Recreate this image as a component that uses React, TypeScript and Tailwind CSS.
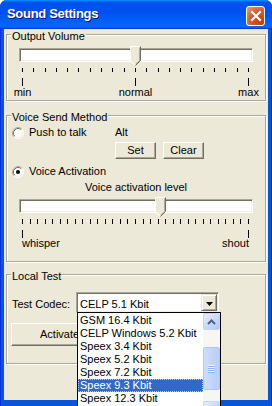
// Sound Settings dialog (XP frame, classic controls)

const CODECS = [
  "GSM 16.4 Kbit",
  "CELP Windows 5.2 Kbit",
  "Speex 3.4 Kbit",
  "Speex 5.2 Kbit",
  "Speex 7.2 Kbit",
  "Speex 9.3 Kbit",
  "Speex 12.3 Kbit",
  "Speex 16.8 Kbit",
]

function Radio({ checked }: { checked?: boolean }) {
  return (
    <svg width="12" height="12" viewBox="0 0 12 12" className="shrink-0">
      <circle cx="6" cy="6" r="5" fill="#fff" />
      <path d="M2.11 9.89A5.5 5.5 0 0 1 9.89 2.11" fill="none" stroke="#ACA899" />
      <path d="M9.89 2.11A5.5 5.5 0 0 1 2.11 9.89" fill="none" stroke="#fff" />
      <path d="M2.82 9.18A4.5 4.5 0 0 1 9.18 2.82" fill="none" stroke="#716F64" />
      <path d="M9.18 2.82A4.5 4.5 0 0 1 2.82 9.18" fill="none" stroke="#F1EFE2" />
      {checked ? <circle cx="6" cy="6" r="2" fill="#000" /> : null}
    </svg>
  )
}

function Thumb({ className }: { className: string }) {
  return (
    <svg width="11" height="20" viewBox="0 0 11 20" className={`absolute -top-[3px] ${className}`}>
      <path d="M0.5 0.5H10.5V14.5L5.5 19.5L0.5 14.5Z" fill="#ECE9D8" />
      <path d="M0.5 14.5V0.5H10" fill="none" stroke="#fff" />
      <path d="M0.5 14.5L5 19" fill="none" stroke="#fff" />
      <path d="M9.5 1.5V14.3L5.5 18.3" fill="none" stroke="#ACA899" />
      <path d="M10.5 0.5V14.5L5.5 19.5" fill="none" stroke="#716F64" />
    </svg>
  )
}

function Track({ thumb }: { thumb: string }) {
  return (
    <div className="relative ml-[12px] h-[14px] w-[234px] border border-t-[#ACA899] border-l-[#ACA899] border-r-white border-b-white bg-white shadow-[inset_1px_1px_#716F64,inset_-1px_-1px_#F1EFE2]">
      <Thumb className={thumb} />
    </div>
  )
}

function Ticks({ count, h }: { count: number; h: string }) {
  return (
    <div className="ml-[15px] mt-[6px] flex w-[227px] justify-between">
      {Array.from({ length: count }).map((_, i) => (
        <div key={i} className={`w-px bg-black ${h}`} />
      ))}
    </div>
  )
}

function Btn({ children, className }: { children: React.ReactNode; className: string }) {
  return (
    <button
      type="button"
      className={`flex items-center border border-t-white border-l-white border-r-[#716F64] border-b-[#716F64] bg-[#ECE9D8] leading-[13px] shadow-[inset_-1px_-1px_#ACA899] ${className}`}
    >
      {children}
    </button>
  )
}

function Group({ label, className, children }: { label: string; className: string; children: React.ReactNode }) {
  return (
    <div className={`relative mx-[2px] border border-[#ACA899] shadow-[inset_1px_1px_#fff,1px_1px_#fff] ${className}`}>
      <span className="absolute -top-[5px] left-[4px] bg-[#ECE9D8] px-px leading-[13px]">{label}</span>
      {children}
    </div>
  )
}

function ScrollBtn({ down }: { down?: boolean }) {
  return (
    <div className="flex h-[17px] w-[17px] shrink-0 items-center justify-center rounded-[2px] border border-[#C3D3FD] bg-[linear-gradient(135deg,#E6EEFE_0%,#C6D6FB_60%,#B4C8F6_100%)]">
      <svg width="9" height="6" viewBox="0 0 9 6">
        <path d={down ? "M1 1L4.5 4.5L8 1" : "M1 5L4.5 1.5L8 5"} fill="none" stroke="#4D6185" strokeWidth="2" />
      </svg>
    </div>
  )
}

function CodecList() {
  return (
    <div className="absolute left-0 top-full z-10 flex w-[144px] border border-black bg-white">
      <div className="flex-1 pt-px">
        {CODECS.map((c) =>
          c === "Speex 9.3 Kbit" ? (
            <div key={c} className="h-[13px] whitespace-nowrap border border-dotted border-[#D8C99A] bg-[#316AC5] pl-px leading-[11px] text-white">
              {c}
            </div>
          ) : (
            <div key={c} className="h-[13px] whitespace-nowrap pl-[2px] leading-[13px]">
              {c}
            </div>
          ),
        )}
      </div>
      <div className="flex w-[17px] flex-col bg-[#F7F6F0]">
        <ScrollBtn />
        <div className="mt-[17px] flex h-[43px] flex-col items-center justify-center gap-px rounded-[2px] border border-[#B2C6F6] bg-[linear-gradient(90deg,#CFDCFD,#B9CDF9)]">
          {[0, 1, 2, 3].map((i) => (
            <div key={i} className="h-px w-[7px] bg-[#EEF4FE] shadow-[0_1px_#8CB0F8]" />
          ))}
        </div>
        <div className="mt-auto">
          <ScrollBtn down />
        </div>
      </div>
    </div>
  )
}

export default function App() {
  return (
    <div className="h-[406px] w-[272px] overflow-hidden font-['Liberation_Sans',Arial,sans-serif] text-[11px] text-black">
      <div className="flex h-full flex-col rounded-t-[7px] bg-[#0855DD] shadow-[inset_1px_0_#0831D9,inset_-1px_0_#001EA0]">
        <div className="flex h-[29px] shrink-0 items-start justify-between rounded-t-[7px] bg-[linear-gradient(180deg,#0997ff,#0053ee_8%,#0050ee_40%,#06f_88%,#06f_93%,#005bff_95%,#003dd7_96%,#003dd7)]">
          <span className="pl-[7px] pt-[6px] text-[13px] font-bold leading-[15px] tracking-[-0.3px] text-white [text-shadow:1px_1px_#0F1089]">
            Sound Settings
          </span>
          <div className="mr-[7px] mt-[6px] flex h-[20px] w-[19px] items-center justify-center rounded-[3px] border border-white bg-[radial-gradient(circle_at_85%_85%,#C43C0A_0%,#DA5A2C_55%,#EB9C7E_100%)]">
            <svg width="12" height="12" viewBox="0 0 12 12">
              <path d="M2 2L10 10M10 2L2 10" stroke="#fff" strokeWidth="2.2" strokeLinecap="square" />
            </svg>
          </div>
        </div>

        <div className="mx-[4px] mb-[6px] flex flex-1 flex-col bg-[#ECE9D8] pt-[5px]">
          <Group label="Output Volume" className="pb-[2px] pt-[13px]">
            <Track thumb="left-[110px]" />
            <Ticks count={21} h="h-[4px]" />
            <div className="ml-[15px] mt-[6px] flex w-[227px] justify-between">
              {["min", "normal", "max"].map((l) => (
                <div key={l} className="flex w-px flex-col items-center">
                  <div className="h-[8px] w-px bg-black" />
                  <span className="mt-px whitespace-nowrap leading-[11px]">{l}</span>
                </div>
              ))}
            </div>
          </Group>

          <Group label="Voice Send Method" className="mt-[14px] pb-[12px] pt-[10px]">
            <div className="flex h-[13px] items-center leading-[13px]">
              <div className="flex w-[108px] items-center gap-[5px] pl-[5px]">
                <Radio />
                <span>Push to talk</span>
              </div>
              <span>Alt</span>
            </div>
            <div className="ml-[108px] mt-[3px] flex gap-[7px]">
              <Btn className="h-[17px] w-[41px] justify-center">Set</Btn>
              <Btn className="h-[17px] w-[41px] justify-center">Clear</Btn>
            </div>
            <div className="mt-[6px] flex h-[13px] items-center gap-[5px] pl-[5px] leading-[13px]">
              <Radio checked />
              <span>Voice Activation</span>
            </div>
            <div className="ml-[12px] mt-[3px] w-[234px] text-center leading-[13px]">Voice activation level</div>
            <div className="mt-[5px]">
              <Track thumb="left-[135px]" />
            </div>
            <Ticks count={31} h="h-[5px]" />
            <div className="ml-[15px] mt-[6px] flex w-[227px] justify-between">
              <div className="flex w-px flex-col items-start">
                <div className="h-[8px] w-px bg-black" />
                <span className="whitespace-nowrap leading-[11px]">whisper</span>
              </div>
              <div className="flex w-px flex-col items-end">
                <div className="h-[8px] w-px bg-black" />
                <span className="whitespace-nowrap leading-[11px]">shout</span>
              </div>
            </div>
          </Group>

          <Group label="Local Test" className="mt-[12px] pb-[17px] pt-[17px]">
            <div className="flex items-start">
              <span className="ml-[5px] mt-[6px] w-[64px] leading-[13px]">Test Codec:</span>
              <div className="relative h-[21px] w-[143px] border border-t-[#ACA899] border-l-[#ACA899] border-r-white border-b-white bg-white p-px shadow-[inset_1px_1px_#716F64,inset_-1px_-1px_#F1EFE2]">
                <div className="flex h-full">
                  <div className="flex flex-1 items-center pl-[2px] pt-[3px] leading-[13px]">CELP 5.1 Kbit</div>
                  <div className="flex w-[16px] items-center justify-center border border-t-[#ECE9D8] border-l-[#ECE9D8] border-r-[#716F64] border-b-[#716F64] bg-[#ECE9D8] pt-[3px] shadow-[inset_1px_1px_#fff,inset_-1px_-1px_#ACA899]">
                    <svg width="7" height="4" viewBox="0 0 7 4">
                      <path d="M0 0H7L3.5 4Z" fill="#000" />
                    </svg>
                  </div>
                </div>
                <CodecList />
              </div>
            </div>
            <Btn className="ml-[4px] mt-[10px] h-[23px] w-[122px] pl-[28px]">Activate</Btn>
          </Group>
        </div>
      </div>
    </div>
  )
}
